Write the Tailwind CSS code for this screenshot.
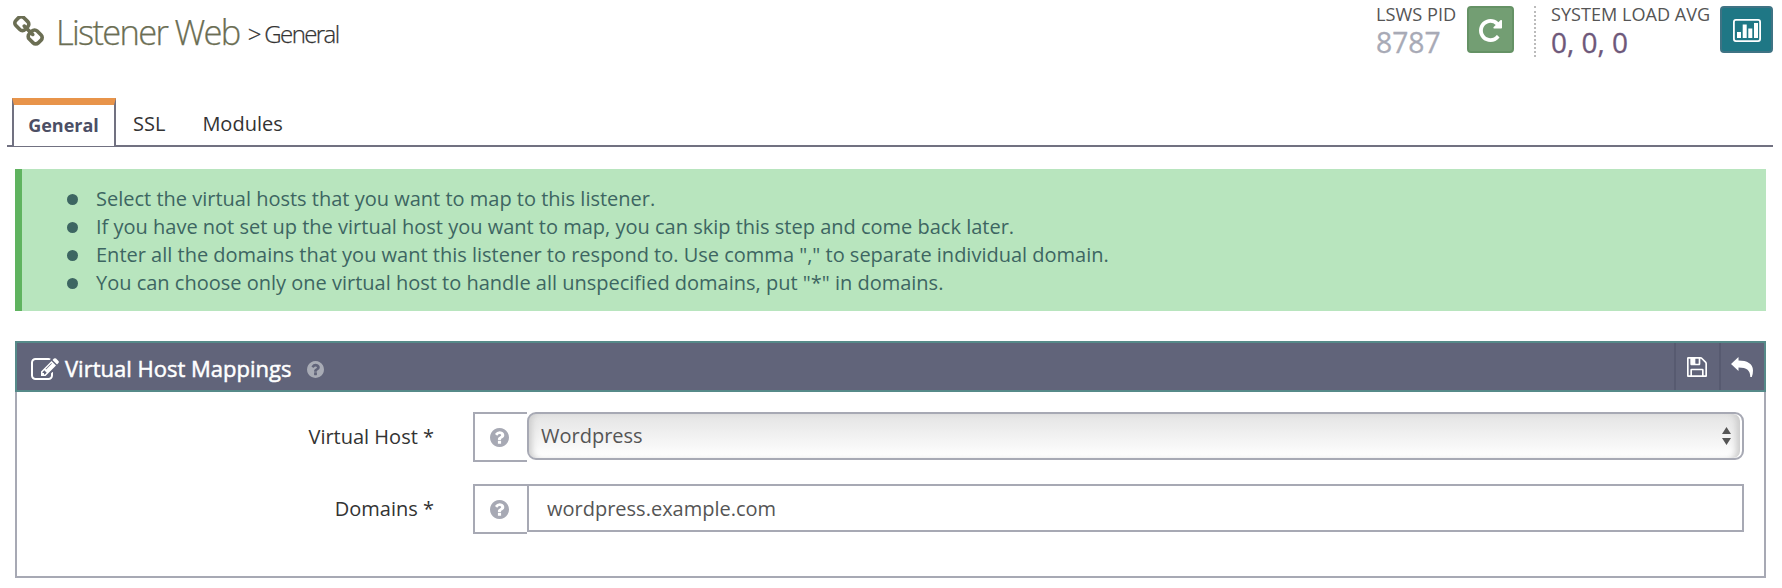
<!DOCTYPE html>
<html lang="en">
<head>
<meta charset="utf-8">
<title>Listener Web</title>
<script src="https://cdn.jsdelivr.net/npm/@tailwindcss/browser@4"></script>
</head>
<body class="h-[588px] overflow-hidden bg-white font-['Open_Sans','Noto_Sans',sans-serif] text-[20px] leading-[28px] text-[#333]">
<svg class="hidden">
  <symbol id="question" viewBox="128 128 1536 1536"><path d="M1024 1376v-192q0-14-9-23t-23-9h-192q-14 0-23 9t-9 23v192q0 14 9 23t23 9h192q14 0 23-9t9-23zm256-672q0-88-55.500-163t-138.500-116-170-41q-243 0-371 213-15 24 8 42l132 100q7 6 19 6 16 0 25-12 53-68 86-92 34-24 86-24 48 0 85.500 26t37.500 59q0 38-20 61t-68 45q-63 28-115.500 86.500t-52.500 125.500v36q0 14 9 23t23 9h192q14 0 23-9t9-23q0-19 21.500-49.500t54.500-49.500q32-18 49-28.500t46-35 44.500-48 28-60.500 12.500-81zm384 192q0 209-103 385.500t-279.500 279.500-385.500 103-385.500-103-279.500-279.500-103-385.500 103-385.500 279.500-279.500 385.500-103 385.500 103 279.500 279.500 103 385.500z"/></symbol>
</svg>

<header class="flex h-[98px] items-start justify-between pl-[13px] pr-[9px]">
  <h1 class="flex items-baseline pt-[8px] font-light leading-[48px] [-webkit-text-stroke:0.25px_currentColor]">
    <svg class="mr-[12px] mt-[8px] h-[31px] w-[31px] shrink-0 self-start" viewBox="80 80 1632 1632" fill="#6b6e53"><path d="M1520 1216q0-40-28-68l-208-208q-28-28-68-28-42 0-72 32 3 3 19 18.500t21.500 21.500 15 19 13 25.500 3.500 27.500q0 40-28 68t-68 28q-15 0-27.500-3.500t-25.500-13-19-15-21.500-21.500-18.500-19q-33 31-33 73 0 40 28 68l206 207q27 27 68 27 40 0 68-26l147-146q28-28 28-67zm-703-705q0-40-28-68l-206-207q-28-28-68-28-39 0-68 27l-147 146q-28 28-28 67 0 40 28 68l208 208q27 27 68 27 42 0 72-31-3-3-19-18.500t-21.500-21.500-15-19-13-25.500-3.500-27.500q0-40 28-68t68-28q15 0 27.500 3.500t25.500 13 19 15 21.500 21.500 18.500 19q33-31 33-73zm895 705q0 120-85 203l-147 146q-83 83-203 83-121 0-204-85l-206-207q-83-83-83-203 0-123 88-209l-88-88q-86 88-208 88-120 0-204-84l-208-208q-84-84-84-204t85-203l147-146q83-83 203-83 121 0 204 85l206 207q83 83 83 203 0 123-88 209l88 88q86-88 208-88 120 0 204 84l208 208q84 84 84 204z"/></svg>
    <span class="whitespace-nowrap text-[34.500px] tracking-[-1.700px] text-[#6b6e53]">Listener Web</span>
    <span class="ml-[8px] -translate-y-[2px] whitespace-nowrap text-[24px] tracking-[-1.600px] text-[#333]">&gt; General</span>
  </h1>
  <div class="flex pt-[6px]">
    <div class="w-[91px]">
      <div class="-mt-[4px] h-[22px] whitespace-nowrap text-[18.2px] leading-[24px] text-[#555]">LSWS PID</div>
      <div class="whitespace-nowrap text-[28.3px] leading-[36px] text-[#a8aab6] [-webkit-text-stroke:0.3px_currentColor]">8787</div>
    </div>
    <button class="flex h-[47px] w-[47px] items-center justify-center rounded-[4px] border-2 border-[#659265] bg-[#739e73]">
      <svg class="mt-[2px] h-[23px] w-[23px]" viewBox="128 128 1536 1536" fill="#fff"><path d="M1664 256v448q0 26-19 45t-45 19h-448q-42 0-59-40-17-39 14-69l138-138q-148-137-349-137-104 0-198.500 40.500t-163.500 109.500-109.500 163.500-40.500 198.500 40.500 198.500 109.500 163.500 163.500 109.500 198.500 40.500q119 0 225-52t179-147q7-10 23-12 15 0 25 9l137 138q9 8 9.500 20.500t-7.500 22.500q-109 132-264 204.500t-327 72.500q-156 0-298-61t-245-164-164-245-61-298 61-298 164-245 245-164 298-61q147 0 284.500 55.500t244.500 156.500l130-129q29-31 70-14 39 17 39 59z"/></svg>
    </button>
    <div class="ml-[20px] h-[51px] w-[195px] border-l-2 border-dotted border-[#bbb] pl-[15px]">
      <div class="-mt-[4px] h-[22px] whitespace-nowrap text-[18.1px] leading-[24px] text-[#555]">SYSTEM LOAD AVG</div>
      <div class="whitespace-nowrap text-[28px] leading-[36px] text-[#6e587a] [-webkit-text-stroke:0.3px_currentColor]">0, 0, 0</div>
    </div>
    <button class="-ml-[9px] flex h-[47px] w-[53px] items-center justify-center rounded-[4px] border-2 border-[#3f7384] bg-[#1f7785]">
      <svg class="mt-[2px] h-[23px] w-[28px]" viewBox="0 0 28 23" fill="#fff"><rect x="0.900" y="0.900" width="26.200" height="21.200" rx="2" fill="none" stroke="#fff" stroke-width="1.800"/><path d="M4 13h4v6H4zM9.700 5.500h4V19h-4zM15.300 9.500h4V19h-4zM21 4h4v15h-4z"/></svg>
    </button>
  </div>
</header>

<nav class="ml-[7px] mr-[9px] flex h-[49px] items-start border-b-2 border-[#717181] pl-[5px]">
  <a class="h-[48px] w-[104px] border-x-2 border-t-[7px] border-x-[#717181] border-t-[#e8944a] bg-white pr-px pt-[6px] text-center text-[18px] font-bold leading-[28px] text-[#4c4f65]">General</a>
  <a class="ml-[17px] pt-[12px]">SSL</a>
  <a class="ml-[37px] pt-[12px]">Modules</a>
</nav>

<main class="ml-[15px] mr-[16px]">
  <section class="mt-[22px] h-[142px] border-l-[7px] border-[#5fb35f] bg-[#b8e5be] pt-[16px] text-[#3d6662]">
    <ul class="pl-[45px]">
      <li class="flex h-[28px] items-center whitespace-nowrap"><i class="mr-[18px] mt-[1px] h-[11px] w-[11px] rounded-full bg-current"></i>Select the virtual hosts that you want to map to this listener.</li>
      <li class="flex h-[28px] items-center whitespace-nowrap"><i class="mr-[18px] mt-[1px] h-[11px] w-[11px] rounded-full bg-current"></i>If you have not set up the virtual host you want to map, you can skip this step and come back later.</li>
      <li class="flex h-[28px] items-center whitespace-nowrap"><i class="mr-[18px] mt-[1px] h-[11px] w-[11px] rounded-full bg-current"></i>Enter all the domains that you want this listener to respond to. Use comma "," to separate individual domain.</li>
      <li class="flex h-[28px] items-center whitespace-nowrap"><i class="mr-[18px] mt-[1px] h-[11px] w-[11px] rounded-full bg-current"></i>You can choose only one virtual host to handle all unspecified domains, put "*" in domains.</li>
    </ul>
  </section>

  <section class="mt-[30px]">
    <div class="flex h-[51px] items-center border-2 border-[#568a89] bg-[#61647a] pl-[14px] text-white">
      <svg class="mt-[4px] h-[22px] w-[28px]" viewBox="0 128 1792 1408" fill="#fff"><path d="M888 1184l116-116-152-152-116 116v56h96v96h56zm440-720q-16-16-33 1l-350 350q-17 17-1 33t33-1l350-350q17-17 1-33zm80 594v190q0 119-84.500 203.500t-203.500 84.500h-832q-119 0-203.500-84.500t-84.500-203.500v-832q0-119 84.500-203.500t203.500-84.500h832q63 0 117 25 15 7 18 23 3 17-9 29l-49 49q-14 14-32 8-23-6-45-6h-832q-66 0-113 47t-47 113v832q0 66 47 113t113 47h832q66 0 113-47t47-113v-126q0-13 9-22l64-64q15-15 35-7t20 29zm-96-738l288 288-672 672h-288v-288zm444 132l-92 92-288-288 92-92q28-28 68-28t68 28l152 152q28 28 28 68t-28 68z"/></svg>
      <h2 class="ml-[6px] mt-[2px] w-[242px] whitespace-nowrap text-[22px] leading-[30px] [-webkit-text-stroke:0.5px_#fff]">Virtual Host Mappings</h2>
      <svg class="mt-[5px] h-[17px] w-[17px]" fill="#a8abb5"><use href="#question"/></svg>
      <div class="ml-auto flex h-full">
        <a class="flex w-[45px] items-center justify-center border-l-2 border-[#575a70] pr-[2px]"><svg class="h-[20px] w-[20px]" viewBox="128 128 1536 1536" fill="#fff"><path d="M512 1536h768v-384h-768v384zm896 0h128v-896q0-14-10-38.500t-20-34.500l-281-281q-10-10-34-20t-39-10v416q0 40-28 68t-68 28h-576q-40 0-68-28t-28-68v-416h-128v1280h128v-416q0-40 28-68t68-28h832q40 0 68 28t28 68v416zm-384-928v-320q0-13-9.500-22.500t-22.500-9.500h-192q-13 0-22.500 9.500t-9.500 22.500v320q0 13 9.500 22.500t22.500 9.500h192q13 0 22.500-9.500t9.500-22.500zm640 32v928q0 40-28 68t-68 28h-1344q-40 0-68-28t-28-68v-1344q0-40 28-68t68-28h928q40 0 88 20t76 48l280 280q28 28 48 76t20 88z"/></svg></a>
        <a class="flex w-[45px] items-center justify-center border-l-2 border-[#575a70] pr-[2px]"><svg class="h-[20px] w-[22px]" viewBox="0 0 22 20" fill="#fff"><path d="M0 7L7.500 0V3.500C16 3.500 22 6.500 22 13.500Q22 17 20.800 20H19.300C19.300 13.500 16 10.500 7.500 10.500V14Z"/></svg></a>
      </div>
    </div>
    <div class="h-[186px] border-2 border-t-0 border-[#a7a9b4] pr-[20px] pt-[20px]">
      <div class="flex h-[72px] items-start">
        <label class="mt-[11px] w-[417px] whitespace-nowrap text-right">Virtual Host *</label>
        <span class="ml-[39px] flex h-[50px] w-[54px] items-center justify-center border-2 border-r-0 border-[#a7a9b4] pr-[4px]"><svg class="h-[19px] w-[19px]" fill="#a7a9b4"><use href="#question"/></svg></span>
        <div class="flex h-[48px] flex-1 items-center justify-between rounded-[9px] border-2 border-[#a7a9b4] bg-linear-to-b from-[#e4e4e4] to-white pl-[12px] pr-[11px] text-[#555] shadow-[inset_-2px_0_0_#fff,inset_-9px_0_6px_-3px_#ccc,inset_7px_0_6px_-4px_#ccc]">
          <span>Wordpress</span>
          <svg class="h-[18px] w-[9px]" viewBox="0 0 9 18" fill="#555"><path d="M4.500 0L9 7H0zM0 11h9L4.500 18z"/></svg>
        </div>
      </div>
      <div class="flex items-start">
        <label class="mt-[11px] w-[417px] whitespace-nowrap text-right">Domains *</label>
        <span class="ml-[39px] flex h-[50px] w-[54px] items-center justify-center border-2 border-r-0 border-[#a7a9b4] pr-[4px]"><svg class="h-[19px] w-[19px]" fill="#a7a9b4"><use href="#question"/></svg></span>
        <div class="flex h-[48px] flex-1 items-center border-2 border-[#a7a9b4] pl-[18px] pt-[2px] text-[#555]">wordpress.example.com</div>
      </div>
    </div>
  </section>
</main>
</body>
</html>
